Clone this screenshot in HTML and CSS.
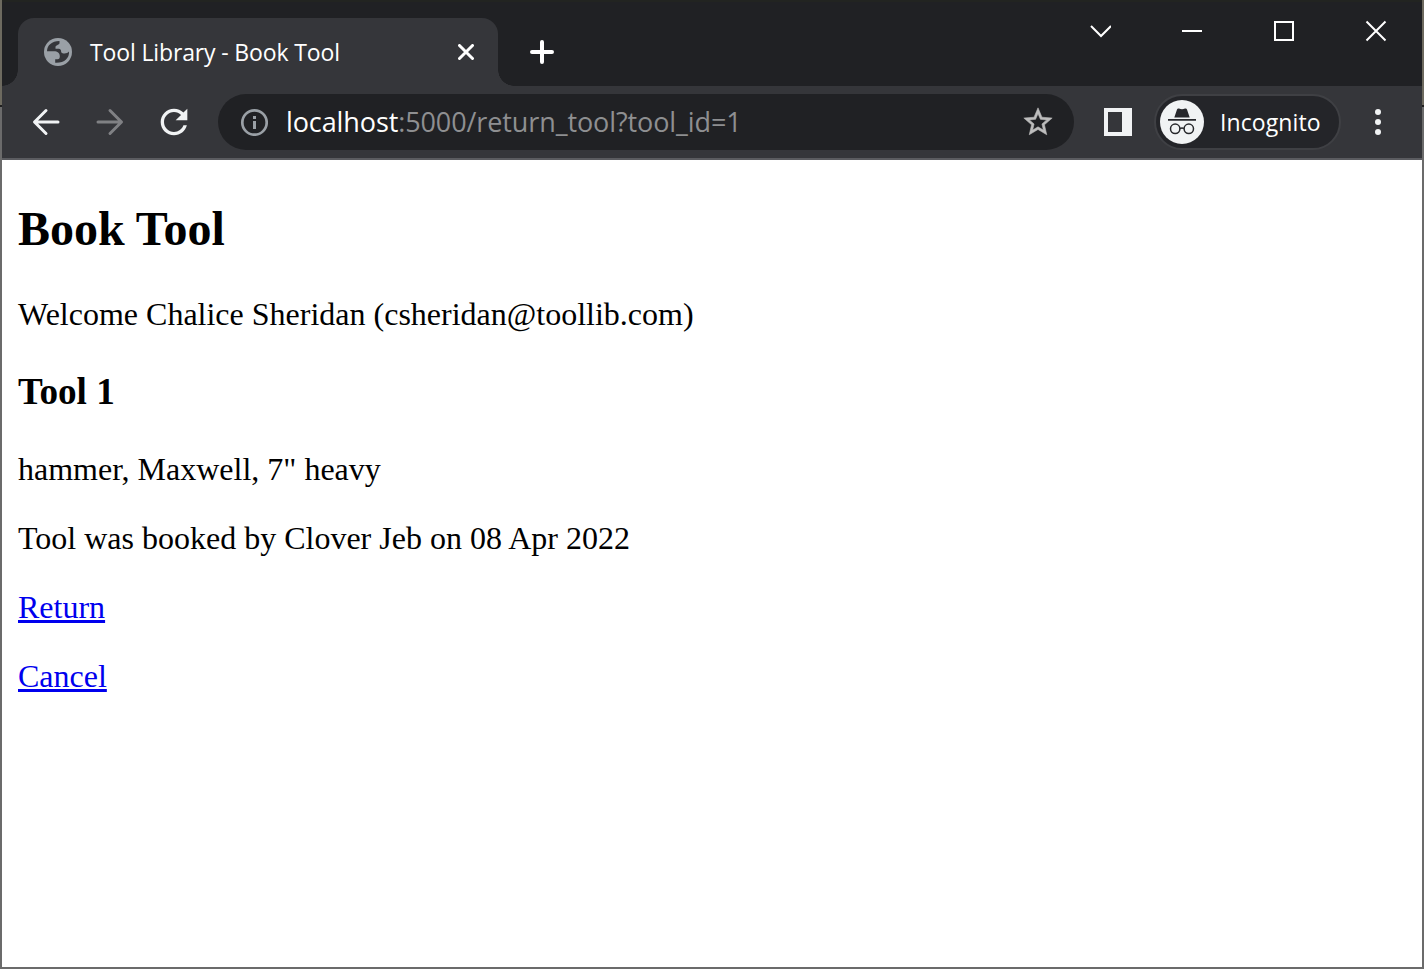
FILE: index.html
```
<!DOCTYPE html>
<html lang="en">
<head>
<meta charset="utf-8">
<title>Tool Library - Book Tool</title>
<link rel="stylesheet" href="styles.css">
</head>
<body>
<div class="window">
  <header class="tabstrip">
    <div class="tab">
      <svg class="globe" viewBox="0 0 28 28"><circle cx="14" cy="14" r="14" fill="#9aa0a6"/><path d="M3 13.3C3.2 7.3 8 3 15.5 3.1V5C15.5 7 11.5 7 11.5 9V10.7H14.7C16.6 10.7 17.2 12 17.2 14.2C18.5 16 23.5 15.8 25 13.5C25.5 20 20.5 25.2 11.2 24.8V21.2H13.5C15.3 21.2 15.8 20.2 15.8 18.3C15.8 15 13.4 13.3 10 13.3Z" fill="#35363a"/></svg>
      <span class="tab-title">Tool Library - Book Tool</span>
      <svg class="tab-close" viewBox="0 0 16 16"><path d="M1.5 1.5l13 13M14.5 1.5l-13 13" stroke="#fff" stroke-width="3" stroke-linecap="round"/></svg>
    </div>
    <svg class="new-tab" viewBox="0 0 24 24"><path d="M12 2v20M2 12h20" stroke="#fff" stroke-width="4" stroke-linecap="round"/></svg>
    <div class="controls">
      <svg viewBox="0 0 22 22"><path d="M2 6l10 10 10-10" fill="none" stroke="#fff" stroke-width="2"/></svg>
      <svg viewBox="0 0 22 22"><path d="M1 11h20" stroke="#fff" stroke-width="2"/></svg>
      <svg viewBox="0 0 22 22"><path d="M2 2h18v18H2z" fill="none" stroke="#fff" stroke-width="2"/></svg>
      <svg viewBox="0 0 22 22"><path d="M1.5 1.5l19 19M20.5 1.5l-19 19" stroke="#fff" stroke-width="2"/></svg>
    </div>
  </header>
  <nav class="toolbar">
    <svg class="back" viewBox="0 0 28 28"><path d="M26 14H3M14 2.5L2.5 14 14 25.5" fill="none" stroke="#f1f3f4" stroke-width="3" stroke-linecap="round" stroke-linejoin="round"/></svg>
    <svg class="forward" viewBox="0 0 28 28"><path d="M2 14h23M14 2.5L25.5 14 14 25.5" fill="none" stroke="#808184" stroke-width="3" stroke-linecap="round" stroke-linejoin="round"/></svg>
    <svg class="reload" viewBox="0 0 24 24"><path fill="#f1f3f4" d="M17.65 6.35C16.2 4.9 14.21 4 12 4c-4.42 0-7.99 3.58-7.99 8s3.57 8 7.99 8c3.73 0 6.84-2.55 7.73-6h-2.08c-.82 2.33-3.04 4-5.65 4-3.31 0-6-2.69-6-6s2.69-6 6-6c1.66 0 3.14.69 4.22 1.78L13 11h7V4l-2.35 2.35z"/></svg>
    <div class="address">
      <svg class="info" viewBox="0 0 28 28"><circle cx="14.5" cy="14.5" r="12.2" fill="none" stroke="#9aa0a6" stroke-width="2.7"/><path d="M14.5 8v3M14.5 13v8" stroke="#9aa0a6" stroke-width="3"/></svg>
      <span class="url"><span class="host">localhost</span>:5000/return_tool?tool_id=1</span>
      <svg class="star" viewBox="0 0 24 24"><path fill="#bdbdbd" stroke="#bdbdbd" stroke-width=".4" d="M22 9.24l-7.19-.62L12 2 9.19 8.63 2 9.24l5.46 4.73L5.82 21 12 17.27 18.18 21l-1.63-7.03L22 9.24zM12 15.4l-3.76 2.27 1-4.28-3.32-2.88 4.38-.38L12 6.1l1.71 4.04 4.38.38-3.32 2.88 1 4.28L12 15.4z"/></svg>
    </div>
    <svg class="panel" viewBox="0 0 28 28"><path fill="#f1f3f4" fill-rule="evenodd" d="M0 0h28v28H0zM4 4v20h14V4z"/></svg>
    <div class="incognito">
      <svg class="spy" viewBox="0 0 44 44"><circle cx="22" cy="22" r="22" fill="#f1f3f4"/><path fill="#27282c" d="M14.3 17.5L17 9.5Q17.5 8.2 19 8.6Q22 9.8 25 8.6Q26.5 8.2 27 9.5L29.7 17.5ZM8 19h28v1.8H8z"/><g fill="none" stroke="#27282c" stroke-width="1.5"><circle cx="15.2" cy="28.8" r="4.7"/><circle cx="28.8" cy="28.8" r="4.7"/><path d="M20 28.5q2-1.2 4 0"/></g></svg>
      <span class="incognito-label">Incognito</span>
    </div>
    <svg class="menu" viewBox="0 0 6 26"><g fill="#f1f3f4"><circle cx="3" cy="3" r="3"/><circle cx="3" cy="13" r="3"/><circle cx="3" cy="23" r="3"/></g></svg>
  </nav>
  <main class="page">
    <h2>Book Tool</h2>
    <p>Welcome Chalice Sheridan (csheridan@toollib.com)</p>
    <h3>Tool 1</h3>
    <p>hammer, Maxwell, 7" heavy</p>
    <p>Tool was booked by Clover Jeb on 08 Apr 2022</p>
    <p><a href="#">Return</a></p>
    <p><a href="#">Cancel</a></p>
  </main>
</div>
</body>
</html>
```
FILE: styles.css
```
* { box-sizing: border-box; }
body { margin: 0; }
svg { display: block; flex: none; }
.window {
  display: flex;
  flex-direction: column;
  height: 969px;
  border: 2px solid #6b6b6b;
  border-image: linear-gradient(#6d6a5f 0 107px, #1f1f1f 107px 109px, #6b6b6b 109px) 2;
  border-top: 0;
  overflow: hidden;
  background: #fff;
}
.tabstrip {
  display: flex;
  flex: none;
  height: 86px;
  padding: 18px 0 0 16px;
  background: linear-gradient(#222421 2px, #202124 2px);
}
.tab {
  position: relative;
  display: flex;
  align-items: center;
  width: 480px;
  height: 68px;
  padding: 0 24px 0 26px;
  border-radius: 16px 16px 0 0;
  background: #35363a;
}
.tab::before, .tab::after {
  content: "";
  position: absolute;
  bottom: 0;
  width: 16px;
  height: 16px;
}
.tab::before { left: -16px; background: radial-gradient(circle at 0 0, transparent 15.5px, #35363a 16px); }
.tab::after { right: -16px; background: radial-gradient(circle at 100% 0, transparent 15.5px, #35363a 16px); }
.globe { width: 28px; height: 28px; margin-right: 18px; }
.tab-title, .incognito-label, .url { padding-bottom: 1px; font-family: "Open Sans", "Noto Sans", sans-serif; white-space: nowrap; }
.tab-title { flex: 1; font-size: 23px; letter-spacing: -0.14px; color: #fff; }
.tab-close { width: 16px; height: 16px; }
.new-tab { width: 24px; height: 24px; margin: 22px 0 0 32px; }
.controls { display: flex; gap: 70px; margin: 2px 35px 0 auto; }
.controls svg { width: 22px; height: 22px; }
.toolbar {
  display: flex;
  flex: none;
  align-items: center;
  height: 74px;
  padding: 0 41px 0 30px;
  border-bottom: 2px solid #5b5c60;
  background: #35363a;
}
.back, .forward { width: 28px; height: 28px; }
.forward { margin-left: 36px; }
.reload { width: 40px; height: 40px; margin-left: 30px; }
.address {
  display: flex;
  align-items: center;
  width: 856px;
  height: 56px;
  margin-left: 24px;
  padding: 0 19px 0 22px;
  border-radius: 28px;
  background: #202124;
}
.info { width: 28px; height: 28px; }
.url { flex: 1; margin-left: 18px; font-size: 27px; letter-spacing: -0.1px; color: #8e8f91; }
.host { color: #fff; }
.star { width: 34px; height: 34px; }
.panel { width: 28px; height: 28px; margin-left: 30px; }
.incognito {
  display: flex;
  align-items: center;
  width: 187px;
  height: 56px;
  margin-left: 22px;
  padding-left: 4px;
  border: 2px solid #3f4044;
  border-radius: 28px;
  background: #242529;
}
.spy { width: 44px; height: 44px; }
.incognito-label { margin-left: 16px; font-size: 23px; letter-spacing: 0.1px; color: #fff; }
.menu { width: 6px; height: 26px; margin-left: auto; }
.page {
  flex: 1;
  padding: 0 16px;
  font: 32px "Liberation Serif", "Times New Roman", serif;
  color: #000;
}
.page h2 { margin: 41px 0 40px; font-size: 48px; }
.page p { margin: 32px 0; }
.page h3 { margin: 37px 0 37.5px; font-size: 37.2px; }
.page a { color: #00e; text-decoration-thickness: 3px; }
```
